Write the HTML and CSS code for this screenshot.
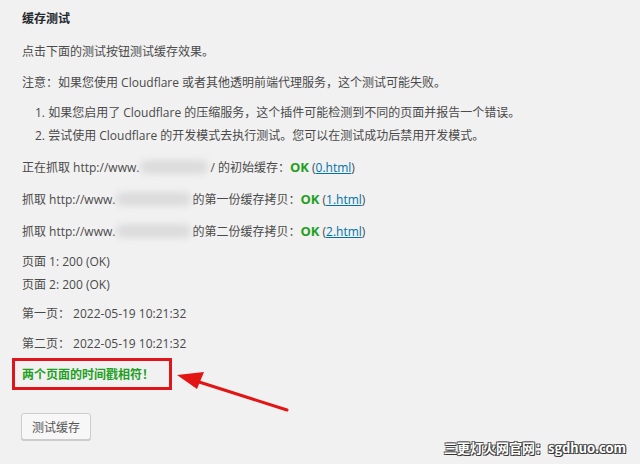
FILE: index.html
```html
<!DOCTYPE html>
<html lang="zh-CN">
<head>
<meta charset="utf-8">
<link rel="stylesheet" href="styles.css">
</head>
<body>
<main class="wrap">
  <h3 class="title">缓存测试</h3>
  <p class="p1">点击下面的测试按钮测试缓存效果。</p>
  <p class="p2">注意：如果您使用 Cloudflare 或者其他透明前端代理服务，这个测试可能失败。</p>
  <ol class="notes">
    <li>如果您启用了 Cloudflare 的压缩服务，这个插件可能检测到不同的页面并报告一个错误。</li>
    <li>尝试使用 Cloudflare 的开发模式去执行测试。您可以在测试成功后禁用开发模式。</li>
  </ol>
  <p class="fetch">正在抓取 http://www.<span class="blur b1"></span>/ 的初始缓存：<span class="ok">OK</span> (<a href="#">0.html</a>)</p>
  <p class="fetch">抓取 http://www.<span class="blur b2"></span>的第一份缓存拷贝：<span class="ok">OK</span> (<a href="#">1.html</a>)</p>
  <p class="fetch">抓取 http://www.<span class="blur b2"></span>的第二份缓存拷贝：<span class="ok">OK</span> (<a href="#">2.html</a>)</p>
  <p class="status">页面 1: 200 (OK)<br>页面 2: 200 (OK)</p>
  <p class="time t1">第一页： 2022-05-19 10:21:32</p>
  <p class="time t2">第二页： 2022-05-19 10:21:32</p>
  <div class="match"><span>两个页面的时间戳相符！</span></div>
  <button class="btn" type="button">测试缓存</button>
</main>
<svg class="arrow" width="640" height="464" viewBox="0 0 640 464">
  <line x1="287" y1="410" x2="196" y2="381" stroke="#e31414" stroke-width="3" stroke-linecap="round"/>
  <polygon points="177,375 204,372 197,389" fill="#e31414"/>
</svg>
<div class="watermark">三更灯火网官网：sgdhuo.com</div>
</body>
</html>
```
FILE: styles.css
```css
html, body {
  margin: 0;
  padding: 0;
  background: #f1f1f1;
}
body {
  width: 640px;
  height: 464px;
  overflow: hidden;
  position: relative;
  font-family: "Open Sans", "Noto Sans CJK SC", sans-serif;
  font-size: 12px;
  color: #4a4a4a;
}
.wrap {
  padding: 9px 0 0 22px;
}
.title {
  margin: 0;
  font-size: 12px;
  line-height: 20px;
  font-weight: 700;
  color: #23282d;
}
p {
  margin: 0;
  line-height: 20px;
}
.p1 { margin-top: 13px; }
.p2 { margin-top: 11px; }
.notes {
  margin: 10px 0 0 0;
  padding-left: 13px;
  list-style-position: inside;
}
.notes li {
  line-height: 20px;
}
.notes li + li { margin-top: 3px; }
.fetch { margin-top: 11px; }
.status {
  margin-top: 8px;
  line-height: 23px;
}
.t1 { margin-top: 8px; }
.t2 { margin-top: 10px; }
.blur {
  display: inline-block;
  height: 14px;
  vertical-align: -2px;
  background: #dcdcdc;
  border-radius: 7px;
  filter: blur(3px);
}
.b1 { width: 68px; margin: 0 2px 0 1px; }
.b2 { width: 75px; margin: 0 1px 0 1px; }
.ok {
  color: #1f9f1f;
  font-weight: 700;
  font-size: 13px;
}
a {
  color: #0073aa;
  text-decoration: underline;
}
.match {
  margin: 4px 0 0 -10px;
  width: 147px;
  height: 26px;
  border: 3px solid #e0151b;
  display: flex;
  align-items: center;
  padding-left: 7px;
  box-sizing: content-box;
}
.match span {
  color: #1f9f1f;
  font-weight: 700;
  font-size: 12px;
}
.btn {
  display: block;
  margin-top: 23px;
  margin-left: -1px;
  width: 70px;
  height: 27px;
  padding: 0;
  border: 1px solid #cccccc;
  border-radius: 3px;
  background: #f7f7f7;
  box-shadow: 0 1px 0 #ccc;
  color: #555;
  font-family: "Open Sans", "Noto Sans CJK SC", sans-serif;
  font-size: 12px;
}
.arrow {
  position: absolute;
  left: 0;
  top: 0;
  pointer-events: none;
}
.watermark {
  position: absolute;
  left: 444px;
  top: 439px;
  font-family: "Noto Sans CJK SC", sans-serif;
  font-size: 13px;
  font-weight: 700;
  color: #fff;
  text-shadow: 1px 1px 0 #333, -1px -1px 0 #555, 1px -1px 0 #555, -1px 1px 0 #555;
  line-height: 18px;
}
```
